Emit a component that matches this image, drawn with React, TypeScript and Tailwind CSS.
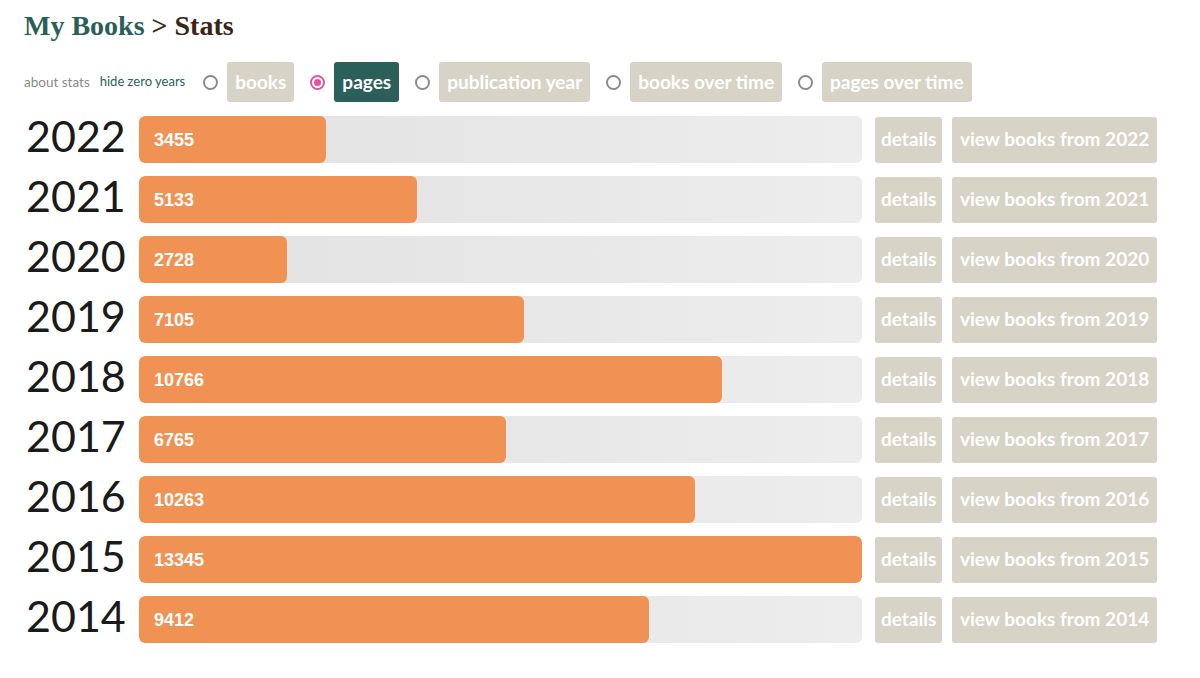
const YEARS = [
  { year: 2022, pages: 3455 },
  { year: 2021, pages: 5133 },
  { year: 2020, pages: 2728 },
  { year: 2019, pages: 7105 },
  { year: 2018, pages: 10766 },
  { year: 2017, pages: 6765 },
  { year: 2016, pages: 10263 },
  { year: 2015, pages: 13345 },
  { year: 2014, pages: 9412 },
];

const MODES = ["books", "pages", "publication year", "books over time", "pages over time"];

const Radio = ({ checked }: { checked: boolean }) => (
  <span
    className={`flex h-[15px] w-[15px] items-center justify-center rounded-full border-2 ${
      checked ? "border-[#e0559c]" : "border-[#8b8b96]"
    }`}
  >
    {checked && <span className="h-[7px] w-[7px] rounded-full bg-[#e0559c]" />}
  </span>
);

const App = () => {
  const max = Math.max(...YEARS.map((y) => y.pages));

  return (
    <div className="min-h-[678px] w-[1200px] bg-white px-6 pt-[10px] font-['Lato',sans-serif]">
      {/* Title */}
      <h1 className="font-['Liberation_Serif',serif] text-[28px] font-bold leading-[32px]">
        <span className="text-[#2a5f58]">My Books</span>
        <span className="text-[#3b2517]"> &gt; Stats</span>
      </h1>

      {/* Controls */}
      <div className="mt-[20px] flex h-10 items-center">
        <span className="text-[13.5px] text-[#8a8a8a]">about stats</span>
        <span className="ml-[10px] text-[13px] text-[#2a5f58]">hide zero years</span>
        <div className="ml-[18px] flex items-center gap-4">
          {MODES.map((m) => {
            const active = m === "pages";
            return (
              <div key={m} className="flex items-center gap-[9px]">
                <Radio checked={active} />
                <span
                  className={`flex h-10 items-center rounded-[3px] px-2 text-[19px] font-bold text-white ${
                    active ? "bg-[#2b5f59]" : "bg-[#d7d3c6]"
                  }`}
                >
                  {m}
                </span>
              </div>
            );
          })}
        </div>
      </div>

      {/* Rows */}
      <div className="mt-[14px] flex flex-col gap-[13px]">
        {YEARS.map((y) => (
          <div key={y.year} className="flex h-[47px] items-center">
            <div className="mb-[8px] w-[115px] pl-[2px] text-[43px] leading-none text-[#1a1a1a]">{y.year}</div>
            <div className="h-[47px] w-[723px] overflow-hidden rounded-[6px] bg-gradient-to-r from-[#e1e1e1] to-[#ededed]">
              <div
                className="flex h-full items-center rounded-[6px] bg-[#f09254] pt-[2px] pl-[15px] font-['Liberation_Sans',sans-serif] text-[18px] font-bold text-white"
                style={{ width: `${(y.pages / max) * 100}%` }}
              >
                {y.pages}
              </div>
            </div>
            <span className="ml-[13px] flex h-[46px] items-center rounded-[3px] bg-[#d7d3c6] px-[6px] text-[19px] font-bold text-white">
              details
            </span>
            <span className="ml-[10px] flex h-[46px] items-center rounded-[3px] bg-[#d7d3c6] px-[7.5px] text-[19px] font-bold text-white">
              view books from {y.year}
            </span>
          </div>
        ))}
      </div>
    </div>
  );
};

export default App;
